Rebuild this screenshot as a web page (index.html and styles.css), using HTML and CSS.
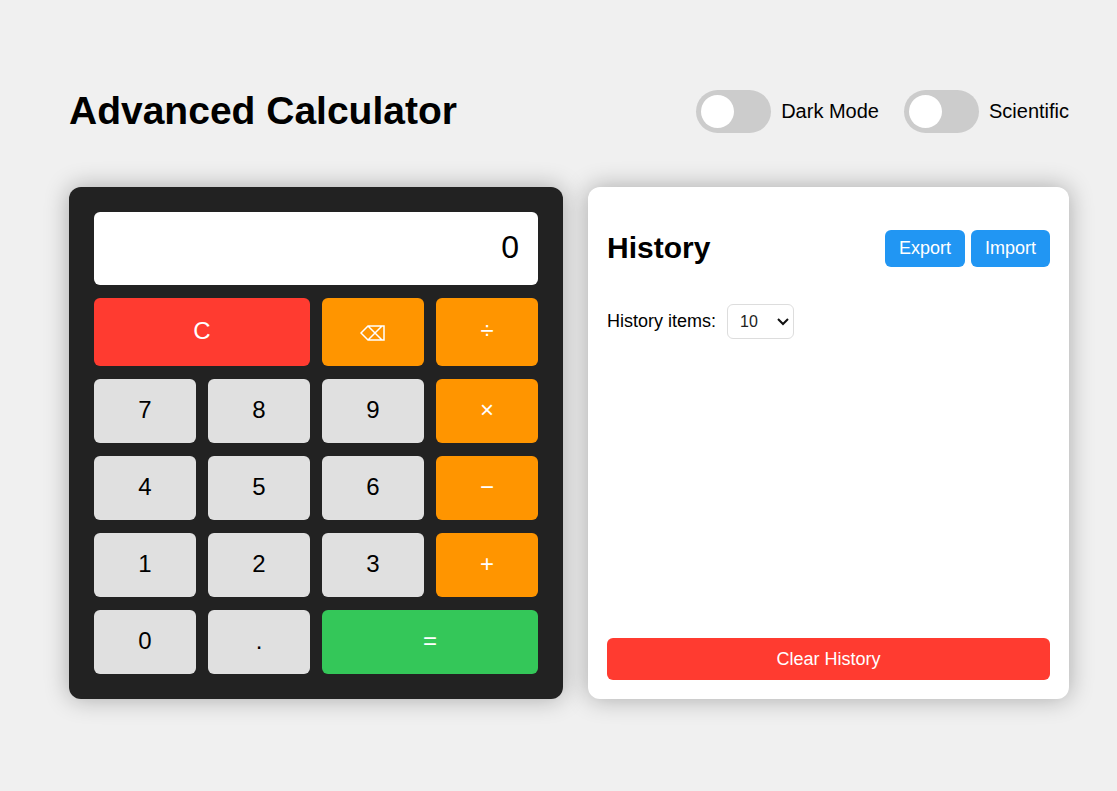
FILE: index.html
```
<!DOCTYPE html>
<html lang="en">
<head>
<meta charset="utf-8">
<meta name="viewport" content="width=device-width, initial-scale=1">
<title>Advanced Calculator</title>
<link rel="stylesheet" href="styles.css">
</head>
<body>
<div class="container">
  <header class="header">
    <h1 class="title">Advanced Calculator</h1>
    <div class="toggles">
      <label class="toggle"><input class="switch" type="checkbox">Dark Mode</label>
      <label class="toggle"><input class="switch" type="checkbox">Scientific</label>
    </div>
  </header>
  <main class="main">
    <section class="calculator" aria-label="Calculator">
      <input class="display" type="text" value="0" aria-label="Display" readonly>
      <div class="keys">
        <button class="key clear wide">C</button>
        <button class="key operator backspace" aria-label="Backspace"><svg class="backspace-icon" viewBox="0 0 26 16" aria-hidden="true"><path d="M1 8L8 1H24V15H8ZM8 1L22 15M8 15L22 1"/></svg></button>
        <button class="key operator">÷</button>
        <button class="key">7</button>
        <button class="key">8</button>
        <button class="key">9</button>
        <button class="key operator">×</button>
        <button class="key">4</button>
        <button class="key">5</button>
        <button class="key">6</button>
        <button class="key operator">−</button>
        <button class="key">1</button>
        <button class="key">2</button>
        <button class="key">3</button>
        <button class="key operator">+</button>
        <button class="key">0</button>
        <button class="key">.</button>
        <button class="key equals wide">=</button>
      </div>
    </section>
    <section class="history">
      <div class="history-header">
        <h2 class="history-title">History</h2>
        <div class="actions">
          <button class="action">Export</button>
          <button class="action">Import</button>
        </div>
      </div>
      <div class="limit">
        <label for="limit">History items:</label>
        <div class="select-box">
          <select class="limit-select" id="limit">
            <option>10</option>
            <option>20</option>
            <option>50</option>
          </select>
          <svg class="chevron" viewBox="0 0 12 8" aria-hidden="true"><path d="M1 1l5 5 5-5"/></svg>
        </div>
      </div>
      <div class="history-list"></div>
      <button class="clear-history">Clear History</button>
    </section>
  </main>
</div>
</body>
</html>
```
FILE: styles.css
```
* {
  box-sizing: border-box;
}

body {
  margin: 0;
  min-height: 100vh;
  padding: 0 0 5px 21px;
  display: flex;
  align-items: center;
  justify-content: center;
  background: #f0f0f0;
  color: #000;
  font-family: "Liberation Sans", Arial, sans-serif;
  font-size: 20px;
}

button,
input,
select {
  font-family: inherit;
}

button {
  border: none;
  cursor: pointer;
}

.container {
  width: 100%;
  max-width: 1048px;
  padding: 0 24px;
}

.header {
  display: flex;
  align-items: center;
  justify-content: space-between;
  margin-bottom: 52px;
}

.title {
  margin: 0;
  font-size: 39px;
  line-height: 48px;
}

.toggles {
  display: flex;
  gap: 25px;
}

.toggle {
  display: flex;
  align-items: center;
  gap: 10px;
}

.switch {
  appearance: none;
  width: 75px;
  height: 43px;
  margin: 0;
  padding: 5px;
  border-radius: 22px;
  background: #ccc;
}

.switch::before {
  content: "";
  display: block;
  width: 33px;
  height: 33px;
  border-radius: 50%;
  background: #fff;
}

.switch:checked::before {
  margin-left: auto;
}

.main {
  display: grid;
  grid-template-columns: 494fr 481fr;
  gap: 25px;
}

.calculator,
.history {
  border-radius: 12px;
  box-shadow: 0 0 25px rgba(0, 0, 0, 0.3);
}

.calculator {
  padding: 25px;
  background: #222;
}

.display {
  display: block;
  width: 100%;
  height: 73px;
  margin-bottom: 13px;
  padding: 0 19px 2px;
  border: none;
  border-radius: 6px;
  background: #fff;
  font-size: 32px;
  text-align: right;
}

.keys {
  display: grid;
  grid-template-columns: repeat(4, 1fr);
  grid-template-rows: 68px;
  grid-auto-rows: 64px;
  gap: 13px 12px;
}

.key {
  padding: 0 0 2px;
  border-radius: 6px;
  background: #e0e0e0;
  color: #000;
  font-size: 24px;
}

.wide {
  grid-column: span 2;
}

.operator {
  background: #ff9500;
  color: #fff;
}

.backspace {
  display: flex;
  align-items: center;
  justify-content: center;
  padding: 2px 0 0;
}

.backspace-icon {
  width: 26px;
  height: 16px;
  fill: none;
  stroke: currentColor;
  stroke-width: 1.5;
}

.clear {
  background: #ff3b30;
  color: #fff;
}

.equals {
  background: #34c759;
  color: #fff;
}

.history {
  display: flex;
  flex-direction: column;
  padding: 19px;
  background: #fff;
}

.history-header {
  display: flex;
  align-items: center;
  justify-content: space-between;
  margin: 24px 0 37px;
}

.history-title {
  margin: 0;
  padding-bottom: 2px;
  font-size: 30px;
  line-height: 35px;
}

.actions {
  display: flex;
  gap: 6px;
}

.action {
  height: 37px;
  padding: 0 14px 1px;
  border-radius: 6px;
  background: #2196f3;
  color: #fff;
  font-size: 18px;
}

.limit {
  display: flex;
  align-items: center;
  gap: 11px;
  font-size: 18px;
}

.select-box {
  position: relative;
}

.limit-select {
  appearance: none;
  display: block;
  width: 67px;
  height: 35px;
  padding: 0 12px;
  border: 1px solid #ddd;
  border-radius: 6px;
  background: #fff;
  color: #222;
  font-size: 16px;
}

.chevron {
  position: absolute;
  top: 14px;
  right: 5px;
  width: 12px;
  height: 8px;
  fill: none;
  stroke: #111;
  stroke-width: 2;
  pointer-events: none;
}

.history-list {
  flex: 1;
}

.clear-history {
  height: 42px;
  border-radius: 6px;
  background: #ff3b30;
  color: #fff;
  font-size: 18px;
}
```
